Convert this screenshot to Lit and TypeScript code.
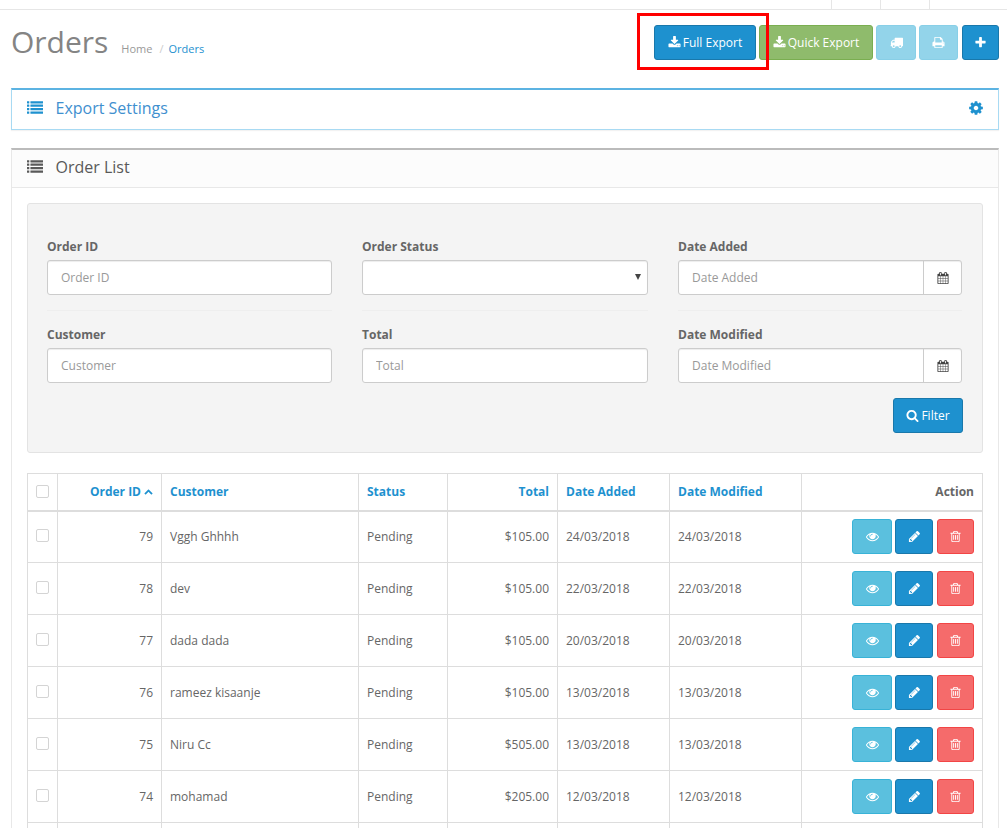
import { LitElement, html, css } from "lit";
import { customElement } from "lit/decorators.js";

const P = {
  download: "M1344 1344q0-26-19-45t-45-19-45 19-19 45 19 45 45 19 45-19 19-45zm256 0q0-26-19-45t-45-19-45 19-19 45 19 45 45 19 45-19 19-45zm128-224v320q0 40-28 68t-68 28h-1472q-40 0-68-28t-28-68v-320q0-40 28-68t68-28h465l135 136q58 56 136 56t136-56l136-136h464q40 0 68 28t28 68zm-325-569q17 41-14 70l-448 448q-18 19-45 19t-45-19l-448-448q-31-29-14-70 17-39 59-39h256v-448q0-26 19-45t45-19h256q26 0 45 19t19 45v448h256q42 0 59 39z",
  plus: "M1600 736v192q0 40-28 68t-68 28h-416v416q0 40-28 68t-68 28h-192q-40 0-68-28t-28-68v-416h-416q-40 0-68-28t-28-68v-192q0-40 28-68t68-28h416v-416q0-40 28-68t68-28h192q40 0 68 28t28 68v416h416q40 0 68 28t28 68z",
  pencil: "M491 1536l91-91-235-235-91 91v107h128v128h107zm523-928q0-22-22-22-10 0-17 7l-542 542q-7 7-7 17 0 22 22 22 10 0 17-7l542-542q7-7 7-17zm-54-192l416 416-832 832h-416v-416zm683 96q0 53-37 90l-166 166-416-416 166-165q36-38 90-38 53 0 91 38l235 234q37 39 37 91z",
  trash: "M704 736v576q0 14-9 23t-23 9h-64q-14 0-23-9t-9-23v-576q0-14 9-23t23-9h64q14 0 23 9t9 23zm256 0v576q0 14-9 23t-23 9h-64q-14 0-23-9t-9-23v-576q0-14 9-23t23-9h64q14 0 23 9t9 23zm256 0v576q0 14-9 23t-23 9h-64q-14 0-23-9t-9-23v-576q0-14 9-23t23-9h64q14 0 23 9t9 23zm128 724v-948h-896v948q0 22 7 40.5t14.5 27 10.5 8.5h832q3 0 10.5-8.5t14.5-27 7-40.5zm-672-1076h448l-48-117q-7-9-17-11h-317q-10 2-17 11zm928 32v64q0 14-9 23t-23 9h-96v948q0 83-47 143.5t-113 60.5h-832q-66 0-113-58.5t-47-141.5v-952h-96q-14 0-23-9t-9-23v-64q0-14 9-23t23-9h309l70-167q15-37 54-63t79-26h320q40 0 79 26t54 63l70 167h309q14 0 23 9t9 23z",
  eye: "M1664 960q-152-236-381-353 61 104 61 225 0 185-131.5 316.5t-316.5 131.5-316.5-131.5-131.5-316.5q0-121 61-225-229 117-381 353 133 205 333.5 326.5t434.5 121.5 434.5-121.5 333.5-326.5zm-720-384q0-20-14-34t-34-14q-125 0-214.5 89.5t-89.5 214.5q0 20 14 34t34 14 34-14 14-34q0-86 61-147t147-61q20 0 34-14t14-34zm848 384q0 34-20 69-140 230-376.5 368.5t-499.5 138.5-499.5-139-376.5-368q-20-35-20-69t20-69q140-229 376.5-368t499.5-139 499.5 139 376.5 368q20 35 20 69z",
  search: "M1216 832q0-185-131.5-316.5t-316.5-131.5-316.5 131.5-131.5 316.5 131.5 316.5 316.5 131.5 316.5-131.5 131.5-316.5zm512 832q0 52-38 90t-90 38q-54 0-90-38l-343-342q-179 124-399 124-143 0-273.5-55.5t-225-150-150-225-55.5-273.5 55.5-273.5 150-225 225-150 273.5-55.5 273.5 55.5 225 150 150 225 55.5 273.5q0 220-124 399l343 343q37 37 37 90z",
  cog: "M1152 896q0-106-75-181t-181-75-181 75-75 181 75 181 181 75 181-75 75-181zm512-109v222q0 12-8 23t-20 13l-185 28q-19 54-39 91 35 50 107 138 10 12 10 25t-9 23q-27 37-99 108t-94 71q-12 0-26-9l-138-108q-44 23-91 38-16 136-29 186-7 28-36 28h-222q-14 0-24.5-8.5t-11.5-21.5l-28-184q-49-16-90-37l-141 107q-10 9-25 9-14 0-25-11-126-114-165-168-7-10-7-23 0-12 8-23 15-21 51-66.5t54-70.5q-27-50-41-99l-183-27q-13-2-21-12.5t-8-23.5v-222q0-12 8-23t19-13l186-28q14-46 39-92-40-57-107-138-10-12-10-24 0-10 9-23 26-36 98.5-107.5t94.5-71.5q13 0 26 10l138 107q44-23 91-38 16-136 29-186 7-28 36-28h222q14 0 24.5 8.5t11.5 21.5l28 184q49 16 90 37l142-107q9-9 24-9 13 0 25 10 129 119 165 170 7 8 7 22 0 12-8 23-15 21-51 66.5t-54 70.5q26 50 41 98l183 28q13 2 21 12.5t8 23.5z",
  truck: "M640 1408q0-52-38-90t-90-38-90 38-38 90 38 90 90 38 90-38 38-90zm-384-512h384v-256h-158q-13 0-22 9l-195 195q-9 9-9 22v30zm1280 512q0-52-38-90t-90-38-90 38-38 90 38 90 90 38 90-38 38-90zm256-1088v1024q0 15-4 26.5t-13.5 18.5-16.5 11.5-23.5 6-22.5 2-25.5 0-22.5-.5q0 106-75 181t-181 75-181-75-75-181h-384q0 106-75 181t-181 75-181-75-75-181h-64q-3 0-22.5.5t-25.5 0-22.5-2-23.5-6-16.5-11.5-13.5-18.5-4-26.5q0-26 19-45t45-19v-320q0-8-.5-35t0-38 2.5-34.5 6.5-37 14-30.5 22.5-30l198-198q19-19 50.5-32t58.5-13h160v-192q0-26 19-45t45-19h1024q26 0 45 19t19 45z",
  print: "M448 1536h896v-256h-896v256zm0-640h896v-384h-160q-40 0-68-28t-28-68v-160h-640v640zm1152 64q0-26-19-45t-45-19-45 19-19 45 19 45 45 19 45-19 19-45zm128 0v416q0 13-9.5 22.5t-22.5 9.5h-224v160q0 40-28 68t-68 28h-960q-40 0-68-28t-28-68v-160h-224q-13 0-22.5-9.5t-9.5-22.5v-416q0-79 56.5-135.5t135.5-56.5h64v-544q0-40 28-68t68-28h672q40 0 88 20t76 48l152 152q28 28 48 76t20 88v256h64q79 0 135.5 56.5t56.5 135.5z",
  calendar: "M192 1664h288v-288h-288v288zm352 0h320v-288h-320v288zm-352-352h288v-320h-288v320zm352 0h320v-320h-320v320zm-352-384h288v-288h-288v288zm736 736h320v-288h-320v288zm-384-736h320v-288h-320v288zm768 736h288v-288h-288v288zm-384-352h320v-320h-320v320zm-352-864v-288q0-13-9.5-22.5t-22.5-9.5h-64q-13 0-22.5 9.5t-9.5 22.5v288q0 13 9.5 22.5t22.5 9.5h64q13 0 22.5-9.5t9.5-22.5zm736 864h288v-320h-288v320zm-384-384h320v-288h-320v288zm384 0h288v-288h-288v288zm32-480v-288q0-13-9.5-22.5t-22.5-9.5h-64q-13 0-22.5 9.5t-9.5 22.5v288q0 13 9.5 22.5t22.5 9.5h64q13 0 22.5-9.5t9.5-22.5zm384-64v1280q0 52-38 90t-90 38h-1408q-52 0-90-38t-38-90v-1280q0-52 38-90t90-38h128v-96q0-66 47-113t113-47h64q66 0 113 47t47 113v96h384v-96q0-66 47-113t113-47h64q66 0 113 47t47 113v96h128q52 0 90 38t38 90z",
  chevronUp: "M1683 1331l-166 165q-19 19-45 19t-45-19l-531-531-531 531q-19 19-45 19t-45-19l-166-165q-19-19-19-45.5t19-45.5l742-741q19-19 45-19t45 19l742 741q19 19 19 45.5t-19 45.5z",
  list: "M256 1312v192q0 13-9.5 22.5t-22.5 9.5h-192q-13 0-22.5-9.5t-9.5-22.5v-192q0-13 9.5-22.5t22.5-9.5h192q13 0 22.5 9.5t9.5 22.5zm0-384v192q0 13-9.5 22.5t-22.5 9.5h-192q-13 0-22.5-9.5t-9.5-22.5v-192q0-13 9.5-22.5t22.5-9.5h192q13 0 22.5 9.5t9.5 22.5zm0-384v192q0 13-9.5 22.5t-22.5 9.5h-192q-13 0-22.5-9.5t-9.5-22.5v-192q0-13 9.5-22.5t22.5-9.5h192q13 0 22.5 9.5t9.5 22.5zm1536 768v192q0 13-9.5 22.5t-22.5 9.5h-1344q-13 0-22.5-9.5t-9.5-22.5v-192q0-13 9.5-22.5t22.5-9.5h1344q13 0 22.5 9.5t9.5 22.5zm-1536-1152v192q0 13-9.5 22.5t-22.5 9.5h-192q-13 0-22.5-9.5t-9.5-22.5v-192q0-13 9.5-22.5t22.5-9.5h192q13 0 22.5 9.5t9.5 22.5zm1536 768v192q0 13-9.5 22.5t-22.5 9.5h-1344q-13 0-22.5-9.5t-9.5-22.5v-192q0-13 9.5-22.5t22.5-9.5h1344q13 0 22.5 9.5t9.5 22.5zm0-384v192q0 13-9.5 22.5t-22.5 9.5h-1344q-13 0-22.5-9.5t-9.5-22.5v-192q0-13 9.5-22.5t22.5-9.5h1344q13 0 22.5 9.5t9.5 22.5zm0-384v192q0 13-9.5 22.5t-22.5 9.5h-1344q-13 0-22.5-9.5t-9.5-22.5v-192q0-13 9.5-22.5t22.5-9.5h1344q13 0 22.5 9.5t9.5 22.5z",
};

const icon = (d: string, cls = "i13") =>
  html`<svg class=${cls} viewBox="0 0 1792 1792" fill="currentColor" aria-hidden="true"><path d=${d}></path></svg>`;

const ROWS = [
  ["79", "Vggh Ghhhh", "Pending", "$105.00", "24/03/2018", "24/03/2018"],
  ["78", "dev", "Pending", "$105.00", "22/03/2018", "22/03/2018"],
  ["77", "dada dada", "Pending", "$105.00", "20/03/2018", "20/03/2018"],
  ["76", "rameez kisaanje", "Pending", "$105.00", "13/03/2018", "13/03/2018"],
  ["75", "Niru Cc", "Pending", "$505.00", "13/03/2018", "13/03/2018"],
  ["74", "mohamad", "Pending", "$205.00", "12/03/2018", "12/03/2018"],
];

@customElement("app-root")
export class AppRoot extends LitElement {
  static styles = css`
    :host {
      display: block;
      width: 1007px;
      height: 828px;
      overflow: hidden;
      background: #fff;
      font-family: "Open Sans", sans-serif;
      font-size: 12px;
      color: #666;
    }
    * { box-sizing: border-box; }
    svg { display: block; flex: none; }
    .i13 { width: 13px; height: 13px; }
    .i12 { width: 12px; height: 12px; }
    .i16 { width: 16px; height: 16px; }
    .i9 { width: 9px; height: 9px; }

    .topbar { height: 10px; border-bottom: 1px solid #e6e6e6; display: flex; justify-content: flex-end; }
    .topcell { width: 49px; border-left: 1px solid #e6e6e6; }
    .topcell.last { width: 78px; }

    .page-header { height: 78px; display: flex; justify-content: space-between; align-items: flex-start; padding: 15px 8px 0 11px; }
    .title { display: flex; align-items: baseline; margin-top: -1px; }
    h1 { margin: 0; font-size: 30px; font-weight: 400; line-height: 36px; color: #848484; }
    .crumbs { margin-left: 13px; display: flex; gap: 5px; font-size: 11px; color: #999; }
    .crumbs .sep { color: #ccc; margin: 0 0 0 2px; }
    .crumbs .cur { color: #1e91cf; }

    .actions { position: relative; display: flex; }
    .redbox { position: absolute; left: -17px; top: -12px; width: 132px; height: 57px; border: 3px solid #f00; }
    .btn {
      height: 35px; border: 1px solid; border-radius: 3px; color: #fff; font: inherit; padding: 0;
      display: flex; align-items: center; justify-content: center; gap: 2px;
    }
    .primary { background: #1e91cf; border-color: #1978ab; }
    .success { background: #8fbb6c; border-color: #7aae50; }
    .faded { background: #93d4ea; border-color: #88cfe7; }
    .full { width: 102px; margin-right: 3px; }
    .quick { width: 114px; margin-right: 3px; }
    .truck { width: 40px; margin-right: 3px; }
    .print { width: 39px; margin-right: 4px; }
    .plus { width: 37px; }

    .panel { margin: 0 8px 18px 11px; border: 1px solid #e8e8e8; border-top-width: 2px; }
    .panel-head { height: 39px; padding: 0 15px 4px; display: flex; align-items: center; font-size: 16px; }
    .panel-head .lbl { margin-left: 12.5px; flex: 1; }
    .settings { border-color: #a8daf3; border-top-color: #5cb3e2; box-shadow: 0 1px 1px rgba(0,0,0,.05); }
    .settings .panel-head { color: #1e91cf; }
    .settings .lbl { color: #3f90cf; }
    .cog { margin-right: -1px; }
    .orders { border-top-color: #bbb; border-bottom: 0; margin-bottom: 0; }
    .orders .panel-head { height: 38px; background: #fcfcfc; border-bottom: 1px solid #e8e8e8; color: #595959; }
    .panel-body { padding: 15px; }

    .well { background: #f4f4f4; border: 1px solid #e3e3e3; border-radius: 3px; padding: 34px 20px 19px 19px; margin-bottom: 20px; }
    .fields { display: grid; grid-template-columns: 285px 286px 284px; column-gap: 30px; }
    .field { padding-bottom: 15px; }
    .field.first { border-bottom: 1px solid #eee; margin-bottom: 15px; }
    label { display: block; font-weight: 700; line-height: 18px; margin-bottom: 4px; color: #666; }
    .input {
      height: 35px; background: #fff; border: 1px solid #ccc; border-radius: 3px;
      box-shadow: inset 0 1px 1px rgba(0,0,0,.075); display: flex; align-items: center;
    }
    .input input {
      flex: 1; min-width: 0; height: 100%; border: 0; background: transparent; outline: 0; padding: 0 13px;
      font: inherit; color: #666;
    }
    .input input::placeholder { color: #999; opacity: 1; }
    .addon { width: 38px; height: 100%; border-left: 1px solid #ccc; display: flex; align-items: center; justify-content: center; color: #444; }
    .select { justify-content: flex-end; padding-right: 6px; }
    .caret { width: 0; height: 0; margin-bottom: 2px; border-left: 3.5px solid transparent; border-right: 3.5px solid transparent; border-top: 6px solid #444; }
    .filter-row { display: flex; justify-content: flex-end; margin-right: -1px; }
    .filter { width: 70px; }

    table { width: 955px; border-collapse: collapse; table-layout: fixed; }
    th, td { border: 1px solid #ddd; padding: 0 8px; text-align: left; vertical-align: middle; font-weight: 400; }
    thead th { height: 37px; font-weight: 700; color: #1e91cf; border-bottom: 2px solid #ddd; }
    thead th.act { color: #666; text-align: right; }
    tbody td { height: 52px; }
    .r { text-align: right !important; }
    .sort { display: inline-flex; align-items: center; gap: 3px; }
    th.chk, td.chk { padding: 0 0 0 8px; }
    .cb { appearance: none; display: block; width: 13px; height: 13px; margin: 0; background: #fff; border: 1px solid #d4d4d4; border-radius: 2px; }
    td.chk .cb { margin-top: -2px; }
    .row-actions { display: flex; justify-content: flex-end; }
    .view { width: 40px; margin-right: 3px; background: #5bc0de; border-color: #39b3d7; }
    .edit { width: 38px; margin-right: 4px; }
    .del { width: 37px; background: #f56b6b; border-color: #f24545; }
  `;

  private field(name: string, first: boolean, date = false) {
    return html`<div class="field ${first ? "first" : ""}">
      <label>${name}</label>
      <div class="input">
        <input type="text" placeholder=${name} />
        ${date ? html`<span class="addon">${icon(P.calendar, "i12")}</span>` : ""}
      </div>
    </div>`;
  }

  render() {
    return html`
      <div class="topbar">
        <div class="topcell"></div><div class="topcell"></div><div class="topcell last"></div>
      </div>
      <header class="page-header">
        <div class="title">
          <h1>Orders</h1>
          <div class="crumbs"><span>Home</span><span class="sep">/</span><span class="cur">Orders</span></div>
        </div>
        <div class="actions">
          <button class="btn primary full">${icon(P.download)}Full Export</button>
          <button class="btn success quick">${icon(P.download)}Quick Export</button>
          <button class="btn faded truck">${icon(P.truck)}</button>
          <button class="btn faded print">${icon(P.print)}</button>
          <button class="btn primary plus">${icon(P.plus)}</button>
          <div class="redbox"></div>
        </div>
      </header>

      <section class="panel settings">
        <div class="panel-head">
          ${icon(P.list, "i16")}<span class="lbl">Export Settings</span>${icon(P.cog, "i16 cog")}
        </div>
      </section>

      <section class="panel orders">
        <div class="panel-head">${icon(P.list, "i16")}<span class="lbl">Order List</span></div>
        <div class="panel-body">
          <div class="well">
            <div class="fields">
              ${this.field("Order ID", true)}
              <div class="field first">
                <label>Order Status</label>
                <div class="input select"><span class="caret"></span></div>
              </div>
              ${this.field("Date Added", true, true)}
              ${this.field("Customer", false)}
              ${this.field("Total", false)}
              ${this.field("Date Modified", false, true)}
            </div>
            <div class="filter-row">
              <button class="btn primary filter">${icon(P.search)}Filter</button>
            </div>
          </div>

          <table>
            <colgroup>
              <col style="width:30px" /><col style="width:104px" /><col style="width:197px" /><col style="width:89px" />
              <col style="width:110px" /><col style="width:112px" /><col style="width:132px" /><col style="width:181px" />
            </colgroup>
            <thead>
              <tr>
                <th class="chk"><input class="cb" type="checkbox" /></th>
                <th class="r"><span class="sort">Order ID ${icon(P.chevronUp, "i9")}</span></th>
                <th>Customer</th>
                <th>Status</th>
                <th class="r">Total</th>
                <th>Date Added</th>
                <th>Date Modified</th>
                <th class="act">Action</th>
              </tr>
            </thead>
            <tbody>
              ${ROWS.map(
                (r) => html`<tr>
                  <td class="chk"><input class="cb" type="checkbox" /></td>
                  <td class="r">${r[0]}</td>
                  <td>${r[1]}</td>
                  <td>${r[2]}</td>
                  <td class="r">${r[3]}</td>
                  <td>${r[4]}</td>
                  <td>${r[5]}</td>
                  <td>
                    <div class="row-actions">
                      <button class="btn view">${icon(P.eye)}</button>
                      <button class="btn primary edit">${icon(P.pencil)}</button>
                      <button class="btn del">${icon(P.trash)}</button>
                    </div>
                  </td>
                </tr>`
              )}
              <tr><td></td><td></td><td></td><td></td><td></td><td></td><td></td><td></td></tr>
            </tbody>
          </table>
        </div>
      </section>
    `;
  }
}
